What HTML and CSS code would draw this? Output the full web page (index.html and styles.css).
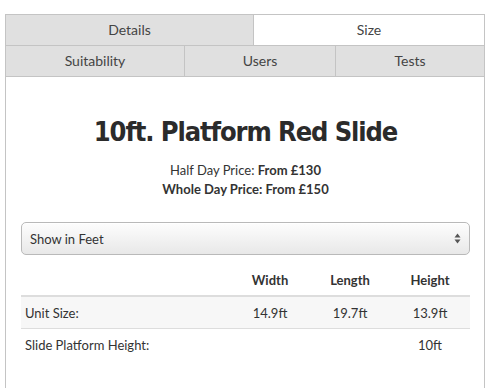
FILE: index.html
```html
<!DOCTYPE html>
<html>
<head>
<meta charset="utf-8">
<link rel="stylesheet" href="styles.css">
</head>
<body>
<div class="panel">
  <div class="tabs tabs-top">
    <div class="tab">Details</div>
    <div class="tab active">Size</div>
  </div>
  <div class="tabs tabs-bottom">
    <div class="tab">Suitability</div>
    <div class="tab">Users</div>
    <div class="tab">Tests</div>
  </div>
  <div class="content">
    <h1 class="title">10ft. Platform Red Slide</h1>
    <div class="prices">
      <p>Half Day Price: <b>From £130</b></p>
      <p><b>Whole Day Price: From £150</b></p>
    </div>
    <div class="select">
      <span>Show in Feet</span>
      <svg class="arrows" width="7" height="11" viewBox="0 0 7 11"><path d="M3.5 0.5 L6.5 4.5 H0.5 Z M3.5 10.5 L6.5 6.5 H0.5 Z" fill="#555"/></svg>
    </div>
    <table class="sizes">
      <thead>
        <tr><th class="label"></th><th>Width</th><th>Length</th><th>Height</th></tr>
      </thead>
      <tbody>
        <tr class="odd"><td class="label">Unit Size:</td><td>14.9ft</td><td>19.7ft</td><td>13.9ft</td></tr>
        <tr><td class="label">Slide Platform Height:</td><td></td><td></td><td>10ft</td></tr>
      </tbody>
    </table>
  </div>
</div>
</body>
</html>
```
FILE: styles.css
```css
html, body { margin: 0; padding: 0; background: #fff; }
body {
  font-family: Lato, "Open Sans", sans-serif;
  font-size: 13px;
  color: #333;
}
.panel {
  margin: 14px 0 0 5px;
  width: 480px;
  box-sizing: border-box;
}
.tabs {
  display: grid;
  border-left: 1px solid #c4c4c4;
  border-right: 1px solid #c4c4c4;
  border-top: 1px solid #c4c4c4;
}
.tabs-top { grid-template-columns: 247px 1fr; }
.tabs-bottom { grid-template-columns: 178px 151px 1fr; }
.tab {
  height: 30px;
  line-height: 30px;
  text-align: center;
  background: #e0e0e0;
  color: #444;
  font-size: 14px;
}
.tab + .tab { border-left: 1px solid #c4c4c4; }
.tab.active { background: #fff; }
.content {
  border: 1px solid #c4c4c4;
  border-bottom: none;
  height: 320px;
  padding: 0 14px 0 15px;
}
.title {
  margin: 38px 0 0;
  text-align: center;
  font-family: "DejaVu Sans Condensed", sans-serif;
  font-weight: bold;
  font-size: 27px;
  line-height: 34px;
  letter-spacing: -1.1px;
  color: #2b2b2b;
}
.prices {
  margin-top: 12px;
  text-align: center;
}
.prices p { margin: 0; line-height: 19px; }
.select {
  margin-top: 23px;
  height: 33px;
  border: 1px solid #b9b9b9;
  border-radius: 5px;
  background: linear-gradient(#fdfdfd, #e8e8e8);
  box-shadow: inset 0 1px 0 #fff;
  display: flex;
  align-items: center;
  justify-content: space-between;
  padding: 0 8px 0 8px;
  box-sizing: border-box;
  color: #333;
}
.arrows { display: block; }
.sizes {
  width: 100%;
  border-collapse: collapse;
  margin-top: 0;
}
.sizes th, .sizes td {
  width: 80px;
  text-align: center;
  padding: 0;
  height: 30px;
}
.sizes th.label, .sizes td.label { width: auto; text-align: left; padding-left: 4px; }
.sizes thead th {
  height: 41px;
  border-bottom: 2px solid #ddd;
  font-weight: bold;
  vertical-align: bottom;
  padding-bottom: 7px;
  box-sizing: border-box;
}
.sizes tbody td { border-bottom: 1px solid #ddd; height: 31px; }
.sizes tbody tr:last-child td { border-bottom: none; }
.sizes tr.odd td { background: #f7f7f7; }
```
